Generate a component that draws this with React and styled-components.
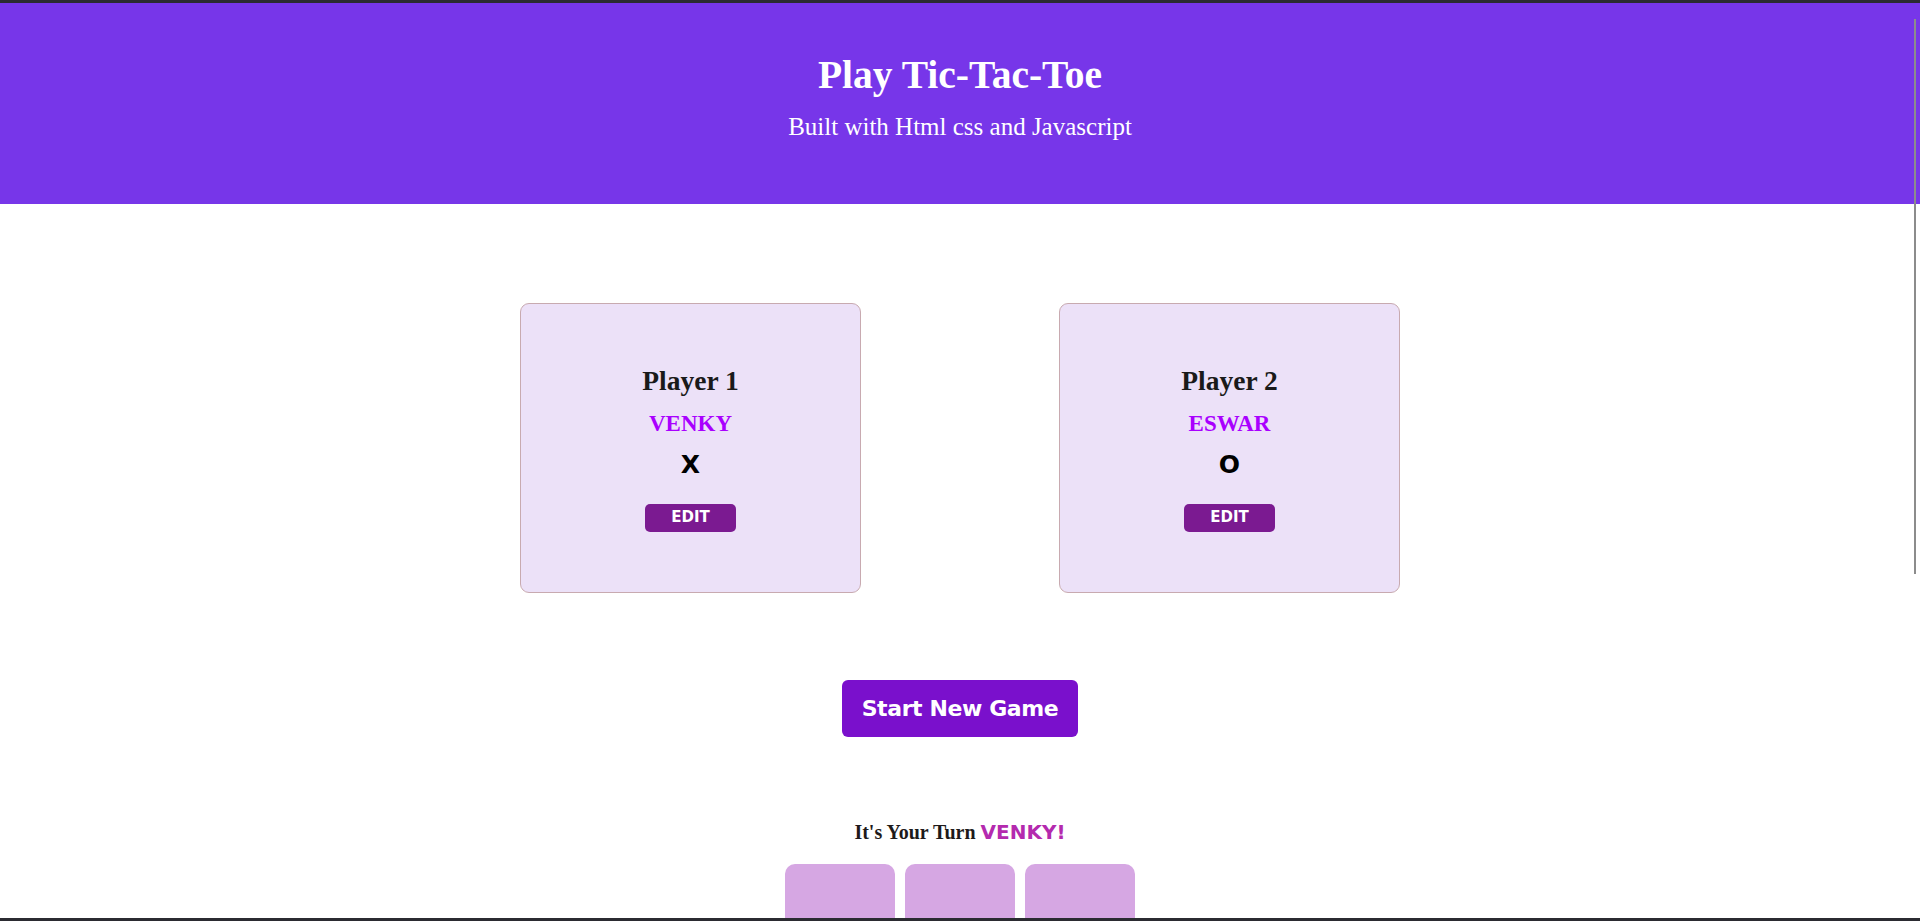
import React from "react";
import styled, { createGlobalStyle } from "styled-components";

const GlobalStyle = createGlobalStyle`
  html {
    overflow: hidden;
  }
  body {
    margin: 0;
    background: #ffffff;
    font-family: "Liberation Serif", "Times New Roman", serif;
    border-top: 3px solid #2b2b31;
  }
  * {
    box-sizing: border-box;
  }
`;

// window frame bits that sit over the page
const BottomFrame = styled.div`
  position: fixed;
  left: 0;
  right: 0;
  bottom: 0;
  height: 3px;
  background: #2b2b31;
`;

const ScrollThumb = styled.div`
  position: fixed;
  top: 19px;
  right: 4px;
  width: 2px;
  height: 555px;
  background: #8c8c8c;
`;

const Header = styled.header`
  background: #7736e9;
  color: #ffffff;
  text-align: center;
  height: 201px;
  padding-top: 53px;
`;

const Title = styled.h1`
  margin: 0;
  font-size: 39.5px;
  line-height: 1;
  font-weight: bold;
`;

const Subtitle = styled.p`
  margin: 18px 0 0;
  font-size: 25px;
  line-height: 1;
`;

const Main = styled.main`
  display: flex;
  flex-direction: column;
  align-items: center;
  padding-top: 99px;
`;

const PlayerRow = styled.section`
  display: flex;
  justify-content: center;
  gap: 198px;
`;

const PlayerCard = styled.article`
  width: 341px;
  height: 290px;
  border: 1px solid #c8aab0;
  border-radius: 9px;
  background: #ece1f8;
  display: flex;
  flex-direction: column;
  align-items: center;
  padding-top: 63px;
  text-align: center;
`;

const PlayerLabel = styled.h2`
  margin: 0;
  font-size: 27.5px;
  line-height: 1;
  font-weight: bold;
  color: #1a1a1a;
`;

const PlayerName = styled.h3`
  margin: 17px 0 0;
  font-size: 23px;
  line-height: 1;
  font-weight: bold;
  color: #a900ff;
`;

const Symbol = styled.p`
  margin: 17px 0 0;
  font-family: "DejaVu Sans", Verdana, sans-serif;
  font-size: 25px;
  line-height: 1;
  font-weight: bold;
  color: #000000;
`;

const EditButton = styled.button`
  margin-top: 27px;
  width: 91px;
  height: 28px;
  border: none;
  border-radius: 5px;
  background: #7b1a91;
  color: #ffffff;
  font-family: "DejaVu Sans", Verdana, sans-serif;
  font-weight: bold;
  font-size: 15px;
  line-height: 1;
  padding: 0;
  cursor: pointer;
`;

const StartButton = styled.button`
  margin-top: 87px;
  width: 236px;
  height: 57px;
  border: none;
  border-radius: 6px;
  background: #7a10cc;
  color: #ffffff;
  font-family: "DejaVu Sans", Verdana, sans-serif;
  font-weight: bold;
  font-size: 22px;
  letter-spacing: -0.4px;
  padding: 0;
  cursor: pointer;
`;

const TurnLine = styled.p`
  margin: 85px 0 0;
  font-size: 20px;
  line-height: 1;
  font-weight: bold;
  color: #1e1a1a;
`;

const ActiveName = styled.span`
  font-family: "DejaVu Sans", Verdana, sans-serif;
  color: #b42aae;
`;

const Board = styled.ol`
  list-style: none;
  margin: 22px 0 0;
  padding: 0;
  display: grid;
  grid-template-columns: repeat(3, 110px);
  gap: 10px;
`;

const Cell = styled.li`
  height: 110px;
  border-radius: 10px;
  background: #d6a7e3;
  cursor: pointer;
`;

const players = [
  { label: "Player 1", name: "VENKY", symbol: "X" },
  { label: "Player 2", name: "ESWAR", symbol: "O" },
];

export default function App() {
  return (
    <>
      <GlobalStyle />
      <Header>
        <Title>Play Tic-Tac-Toe</Title>
        <Subtitle>Built with Html css and Javascript</Subtitle>
      </Header>
      <Main>
        <PlayerRow>
          {players.map((p) => (
            <PlayerCard key={p.label}>
              <PlayerLabel>{p.label}</PlayerLabel>
              <PlayerName>{p.name}</PlayerName>
              <Symbol>{p.symbol}</Symbol>
              <EditButton>EDIT</EditButton>
            </PlayerCard>
          ))}
        </PlayerRow>
        <StartButton>Start New Game</StartButton>
        <TurnLine>
          It's Your Turn <ActiveName>VENKY!</ActiveName>
        </TurnLine>
        <Board>
          {Array.from({ length: 9 }).map((_, i) => (
            <Cell key={i} />
          ))}
        </Board>
      </Main>
      <ScrollThumb />
      <BottomFrame />
    </>
  );
}
